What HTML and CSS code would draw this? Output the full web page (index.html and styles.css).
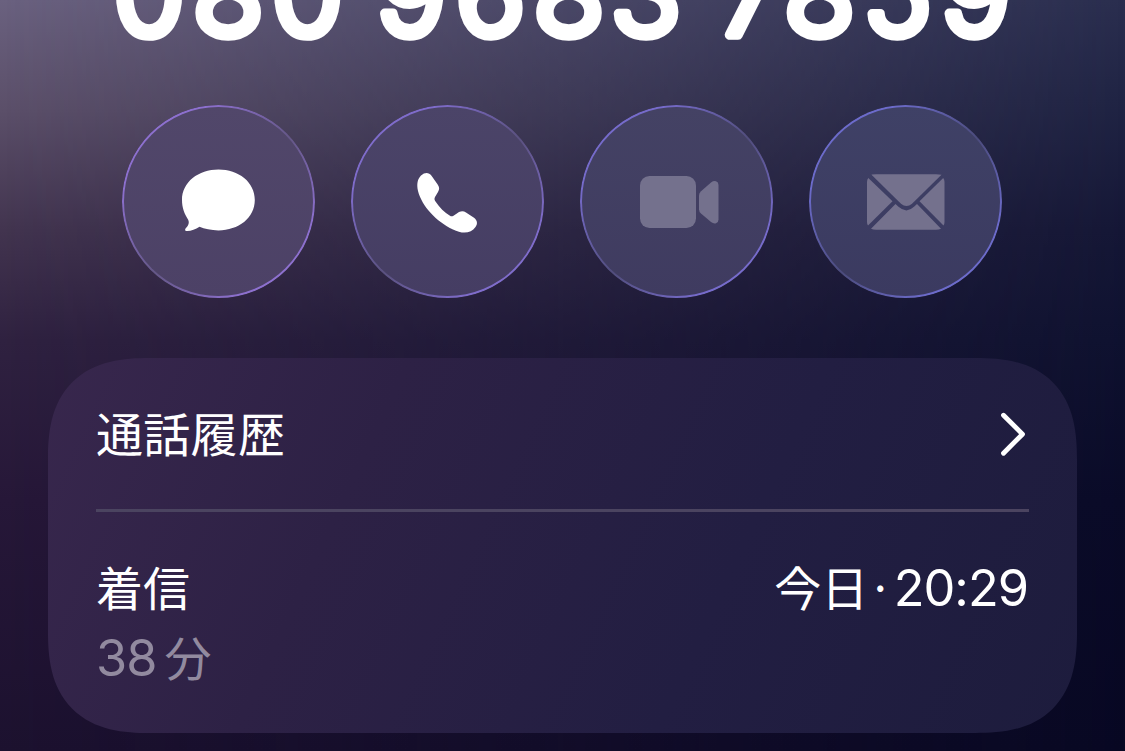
FILE: index.html
```
<!DOCTYPE html>
<html lang="ja">
<head>
    <meta charset="UTF-8">
    <meta name="viewport" content="width=device-width, initial-scale=1.0">
    <title>通話履歴</title>
    <link rel="stylesheet" href="styles.css">
</head>
<body>
    <!-- 電話番号 -->
    <h1 class="number">
        <svg width="1125" height="60" viewBox="0 0 1125 60">
            <text y="35" x="149 228.300 307.300 360 411.500 490.500 569 646 700 750 819.500 897.500 976">080 9683 7859</text>
        </svg>
    </h1>

    <!-- アクションボタン -->
    <div class="actions">
        <button class="action message" aria-label="メッセージ">
            <svg width="193" height="193" viewBox="0 2.700 193 193">
                <path d="M96.500 67.300C116.500 67.300 132.800 79.800 132.800 97.800C132.800 115.800 116.500 128.100 96.500 128.100C89 128.100 82.500 126.500 77.500 124.500C73.500 127 69 128.800 65 128.700C62.600 128.600 62.700 127 64.200 125.400C66.500 123 67.500 120.500 66.300 117.600C62.300 111.800 60 105.500 60 97.800C60 79.800 76.500 67.300 96.500 67.300Z"/>
            </svg>
        </button>
        <button class="action call" aria-label="電話">
            <svg width="193" height="193" viewBox="-0.500 2.500 193 193">
                <path d="M69.500 73C73.500 69.500 77.500 69.800 80 73.300L86 81.800C88.200 85 88 86.800 86.500 89.500L83.500 94.500C82.700 96.300 82.800 97.300 84 99C88 105 93 110 98.500 113.300C99.700 114.100 100.600 114 102 113.200L107.500 109.600C110 108.300 112 108.300 114.500 109.900L122.500 115.300C126 118 126.300 121.500 124 124.500C119.500 131 111 131.800 101.500 127C85 119 70.500 104 66.500 88.500C65 81.500 66 76.500 69.500 73Z"/>
            </svg>
        </button>
        <button class="action video" aria-label="ビデオ" disabled>
            <svg width="193" height="193" viewBox="0 0 193 193">
                <rect x="60" y="71" width="56" height="52" rx="9.500"/>
                <path d="M119 90.500Q119 88 121 86.200L131 77.500Q133.500 75.500 136 76.200Q138.500 77 138.500 80V114.500Q138.500 117.500 136 118.300Q133.500 119 131 117L121 108.500Q119 106.700 119 104.200Z"/>
            </svg>
        </button>
        <button class="action mail" aria-label="メール" disabled>
            <svg width="193" height="193" viewBox="0 0 193 193">
                <path d="M63 69.500Q65 69.300 67 69.300H127Q130 69.300 132.500 69.800L103 98.700Q97.500 103.500 92 98.700L62.500 69.800Z"/>
                <path d="M58 77Q58 74.500 59.300 73L83.500 96.300L59 120.500Q58 119 58 117Z"/>
                <path d="M135.500 77Q135.500 74.500 134.200 73L110.500 96.300L134.500 120.500Q135.500 119 135.500 117Z"/>
                <path d="M62 123.700L86.500 99L89.500 101.800Q97.500 109 105 101.800L108 99L132 123.700Q130 124.700 127 124.700H67Q64 124.700 62 123.700Z"/>
            </svg>
        </button>
    </div>

    <!-- 通話履歴 -->
    <div class="card">
        <div class="card-header">
            <span>通話履歴</span>
            <svg class="chevron" width="28" height="46" viewBox="0 0 28 46">
                <path d="M4.500 4.200L23.500 23.200L4.500 42.200"/>
            </svg>
        </div>
        <div class="call-row">
            <div class="call-info">
                <span>着信</span>
                <span class="duration"><span class="digits">38</span>分</span>
            </div>
            <div class="call-time">今日<span class="dot">·</span><span class="digits">20:29</span></div>
        </div>
    </div>
</body>
</html>
```

FILE: styles.css
```
* {
    box-sizing: border-box;
}
body {
    margin: 0;
    height: 751px;
    overflow: hidden;
    position: relative;
    color: #fff;
    font-family: "Noto Sans CJK JP", sans-serif;
    background: linear-gradient(to bottom, #2a2e4f 0, #202444 100px, #151736 230px, #0f1230 340px, #0a0b28 500px, #080823 751px);
}
/* 左側の明るい紫 */
body::before {
    content: "";
    position: absolute;
    inset: 0;
    z-index: -1;
    background: linear-gradient(to bottom, #6a617f 0, #5b4f69 110px, #42344f 230px, #2f2140 340px, #261738 500px, #1c112f 751px);
    -webkit-mask-image: linear-gradient(to right, #000, transparent);
    mask-image: linear-gradient(to right, #000, transparent);
}
.number {
    margin: 0;
    height: 60px;
}
.number svg {
    display: block;
    overflow: visible;
}
/* 太い線で角を丸くする */
.number text {
    font-family: Inter, sans-serif;
    font-size: 116px;
    font-weight: 300;
    text-anchor: middle;
    fill: #fff;
    stroke: #fff;
    stroke-width: 9.5px;
    stroke-linejoin: round;
}
.actions {
    display: flex;
    justify-content: center;
    gap: 36px;
    margin-top: 45px;
    padding-right: 1px;
}
.action {
    position: relative;
    width: 193px;
    height: 193px;
    padding: 0;
    border: none;
    border-radius: 50%;
}
.action svg {
    display: block;
    fill: #fff;
}
.action:disabled svg {
    fill: #74718d;
}
/* ガラス風の縁 */
.action::before {
    content: "";
    position: absolute;
    inset: 0;
    border-radius: 50%;
    padding: 2px;
    background: linear-gradient(135deg, var(--ring) 22%, var(--ring-dim) 52%, var(--ring) 80%);
    -webkit-mask: linear-gradient(#000 0 0) content-box exclude, linear-gradient(#000 0 0);
    mask: linear-gradient(#000 0 0) content-box exclude, linear-gradient(#000 0 0);
}
.message {
    --ring: #8d70cf;
    --ring-dim: #645786;
    background: linear-gradient(#51476a, #4c4166);
}
.call {
    --ring: #7f6ccb;
    --ring-dim: #5a517f;
    background: linear-gradient(#4b4468, #453d63);
}
.video {
    --ring: #766bcb;
    --ring-dim: #514d7c;
    background: linear-gradient(#444264, #3f3b60);
}
.mail {
    --ring: #6c6bcb;
    --ring-dim: #4b4b7c;
    background: linear-gradient(#3f4166, #3b3a60);
}
.card {
    width: 1029px;
    height: 375px;
    margin: 60px auto 0;
    padding: 0 48px;
    border-radius: 84px;
    font-size: 47px;
    line-height: 70px;
    background: linear-gradient(115deg, #38274d 0, #2d2145 30%, #221e42 65%, #1d1c3d 100%);
}
@supports (corner-shape: squircle) {
    .card {
        border-radius: 102px;
        corner-shape: superellipse(1.35);
    }
}
.card-header {
    display: flex;
    justify-content: space-between;
    align-items: center;
    height: 154px;
    padding-bottom: 3px;
    border-bottom: 3px solid #4b4460;
}
.card-header span {
    letter-spacing: 0.3px;
}
.chevron {
    margin: 3px 2px 0 0;
    fill: none;
    stroke: #fff;
    stroke-width: 4.8;
    stroke-linecap: round;
    stroke-linejoin: round;
}
.call-row {
    display: flex;
    justify-content: space-between;
    padding-top: 39px;
}
.call-info {
    display: flex;
    flex-direction: column;
}
.digits {
    font-family: Inter, sans-serif;
    font-size: 50.5px;
    letter-spacing: -1px;
}
.duration {
    color: #928a9f;
}
.duration .digits {
    margin-right: 8px;
}
.call-time {
    margin-right: 1px;
}
.dot {
    margin: 0 0 0 -1px;
}
```
